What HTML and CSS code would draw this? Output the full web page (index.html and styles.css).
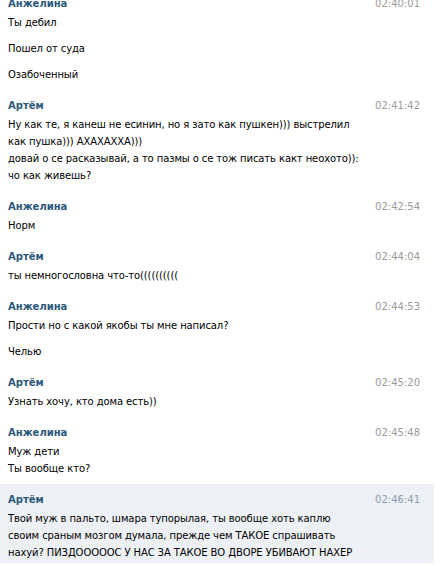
FILE: index.html
```html
<!DOCTYPE html>
<html lang="ru">
<head>
<meta charset="utf-8">
<title>Диалог</title>
<link rel="stylesheet" href="styles.css">
</head>
<body>
<div class="log">
  <div class="group">
    <div class="head"><span class="name">Анжелина</span><span class="time">02:40:01</span></div>
    <div class="msgs">
      <p>Ты дебил</p>
      <p>Пошел от суда</p>
      <p>Озабоченный</p>
    </div>
  </div>
  <div class="group">
    <div class="head"><span class="name">Артём</span><span class="time">02:41:42</span></div>
    <div class="msgs">
      <p>Ну как те, я канеш не есинин, но я зато как пушкен))) выстрелил<br>как пушка))) АХАХАХХА)))<br>довай о се расказывай, а то пазмы о се тож писать какт неохото)):<br>чо как живешь?</p>
    </div>
  </div>
  <div class="group">
    <div class="head"><span class="name">Анжелина</span><span class="time">02:42:54</span></div>
    <div class="msgs">
      <p>Норм</p>
    </div>
  </div>
  <div class="group">
    <div class="head"><span class="name">Артём</span><span class="time">02:44:04</span></div>
    <div class="msgs">
      <p>ты немногословна что-то((((((((((</p>
    </div>
  </div>
  <div class="group">
    <div class="head"><span class="name">Анжелина</span><span class="time">02:44:53</span></div>
    <div class="msgs">
      <p>Прости но с какой якобы ты мне написал?</p>
      <p>Челью</p>
    </div>
  </div>
  <div class="group">
    <div class="head"><span class="name">Артём</span><span class="time">02:45:20</span></div>
    <div class="msgs">
      <p>Узнать хочу, кто дома есть))</p>
    </div>
  </div>
  <div class="group">
    <div class="head"><span class="name">Анжелина</span><span class="time">02:45:48</span></div>
    <div class="msgs">
      <p>Муж дети<br>Ты вообще кто?</p>
    </div>
  </div>
  <div class="group group-new">
    <div class="head"><span class="name">Артём</span><span class="time">02:46:41</span></div>
    <div class="msgs">
      <p>Твой муж в пальто, шмара тупорылая, ты вообще хоть каплю<br>своим сраным мозгом думала, прежде чем ТАКОЕ спрашивать<br>нахуй? ПИЗДОООООС У НАС ЗА ТАКОЕ ВО ДВОРЕ УБИВАЮТ НАХЕР</p>
    </div>
  </div>
</div>
</body>
</html>
```

FILE: styles.css
```css
html, body {
  margin: 0;
  padding: 0;
  background: #ffffff;
}

body {
  font-family: "DejaVu Sans", Verdana, sans-serif;
  font-size: 10px;
  color: #000000;
}

.log {
  width: 434px;
  margin-top: -12px;
}

.group {
  padding: 7px 14px 7px 8px;
}

.group-new {
  background: #edf1f5;
  padding-bottom: 2px;
}

.head {
  display: flex;
  justify-content: space-between;
  align-items: baseline;
  line-height: 17px;
  margin-bottom: 2px;
}

.name {
  font-weight: bold;
  color: #2b587a;
}

.time {
  color: #9a9a9a;
}

.group-new .time {
  color: #8d9cb0;
}

.msgs {
  display: flex;
  flex-direction: column;
  gap: 9px;
}

.msgs p {
  margin: 0;
  line-height: 17px;
  letter-spacing: -0.1px;
  white-space: nowrap;
}
```
